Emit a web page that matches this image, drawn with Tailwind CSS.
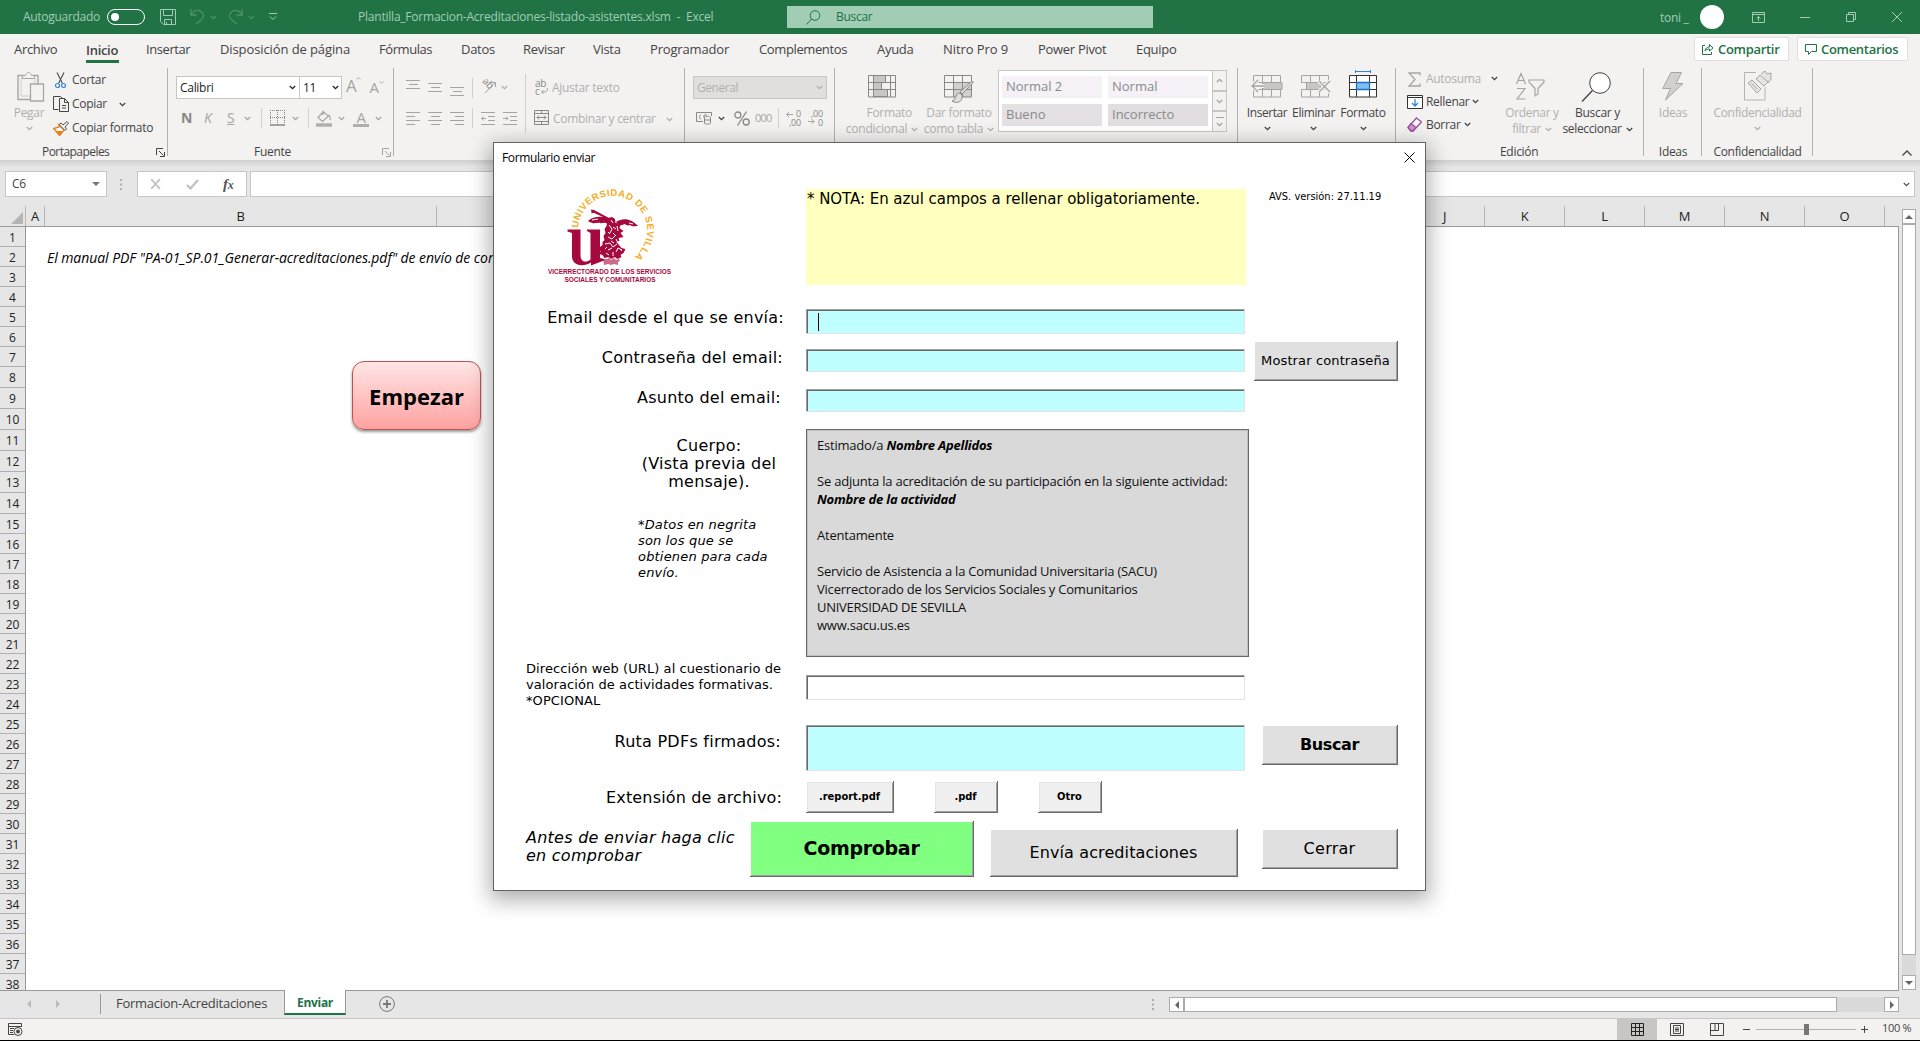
<!DOCTYPE html>
<html lang="es">
<head>
<meta charset="utf-8">
<title>Plantilla_Formacion-Acreditaciones-listado-asistentes.xlsm - Excel</title>
<script src="https://cdn.jsdelivr.net/npm/@tailwindcss/browser@4"></script>
</head>
<body class="relative h-[1041px] w-[1920px] overflow-hidden bg-[#e6e6e6] font-['Open_Sans','Noto_Sans',sans-serif] text-[12px] leading-4 tracking-[-0.3px] whitespace-nowrap text-[#444]">
<svg class="hidden">
  <symbol id="chev" viewBox="0 0 7 5"><path d="M.8 1l2.7 2.7L6.2 1" fill="none" stroke="currentColor" stroke-width="1.3"/></symbol>
  <symbol id="launch" viewBox="0 0 9 9"><path d="M.5 7V.5H7M3 3l4.5 4.5M8.500 4v4.500H4" fill="none" stroke="currentColor"/></symbol>
</svg>
<div class="flex h-full flex-col">

<!-- Title bar -->
<header class="flex h-[34px] shrink-0 items-center bg-[#217346] text-[#a0cdb4]">
  <span class="ml-[23px] w-[84px]">Autoguardado</span>
  <div class="flex h-4 w-[38px] items-center rounded-full border border-white pl-[3px]"><i class="size-2 rounded-full bg-white"></i></div>
  <svg class="ml-[15px] h-[17px] w-4" viewBox="0 0 16 17" fill="none" stroke="#a0cdb4"><path d="M.5.5h15v15h-12l-3-3zM3.500.5v6h9v-6M4.500 15.500v-5h7v5M6.500 13v2.500"/></svg>
  <svg class="ml-[14px] h-4 w-[15px]" viewBox="0 0 15 16" fill="none" stroke="#4d9169" stroke-width="1.3"><path d="M.8 0v6h6M1 6C3 1 8 .5 11 2.500c4 3 3 6 0 8.500l-5 4"/></svg>
  <svg class="ml-[5px] h-[5px] w-[7px] text-[#4d9169]"><use href="#chev"/></svg>
  <svg class="ml-[11px] h-4 w-[15px]" viewBox="0 0 15 16" fill="none" stroke="#4d9169" stroke-width="1.3"><path d="M14.200 0v6h-6M14 6C12 1 7 .5 4 2.500c-4 3-3 6 0 8.500l5 4"/></svg>
  <svg class="ml-[5px] h-[5px] w-[7px] text-[#4d9169]"><use href="#chev"/></svg>
  <svg class="ml-[14px] h-2 w-2" viewBox="0 0 8 8" fill="none" stroke="#a0cdb4"><path d="M0 .5h8M1 3.500L4 6.500 7 3.500"/></svg>
  <span class="ml-[81px] w-[429px] pb-px tracking-[-0.22px] whitespace-pre">Plantilla_Formacion-Acreditaciones-listado-asistentes.xlsm  -  Excel</span>
  <div class="flex h-[22px] w-[366px] items-center bg-[#a0cdb4] text-[#217346]">
    <svg class="ml-[19px] h-[15px] w-[15px]" viewBox="0 0 15 15" fill="none" stroke="#217346"><circle cx="9" cy="5.500" r="4.800"/><path d="M5.500 9L.5 14.500"/></svg>
    <span class="ml-[15px]">Buscar</span>
  </div>
  <span class="mt-px ml-[507px] w-10">toni _</span>
  <i class="size-[24px] rounded-full bg-white"></i>
  <svg class="ml-[28px] h-[11px] w-[13px]" viewBox="0 0 13 11" fill="none" stroke="#a0cdb4"><path d="M.5.500h12v10H.5zM.5 2.500h12M6.500 9V4.500M4.500 6.500l2-2 2 2"/></svg>
  <svg class="ml-[35px] h-[11px] w-[10px]" viewBox="0 0 10 11" stroke="#a0cdb4"><path d="M0 5.500h10"/></svg>
  <svg class="ml-[36px] h-[10px] w-[10px]" viewBox="0 0 10 10" fill="none" stroke="#a0cdb4"><path d="M.5 2.500h7v7h-7zM2.500 2V.5h7v7H8"/></svg>
  <svg class="ml-[36px] h-[10px] w-[10px]" viewBox="0 0 10 10" stroke="#a0cdb4"><path d="M0 0l10 10M10 0L0 10"/></svg>
</header>

<!-- Ribbon tabs -->
<nav class="flex h-[34px] shrink-0 items-center bg-[#f3f2f1] pb-[4px] pl-[14px] text-[13px] leading-[30px]">
  <span class="w-[72px]">Archivo</span>
  <span class="w-[60px]"><b class="block h-[28px] w-[33px] border-b-3 border-[#217346] leading-[30px] font-semibold">Inicio</b></span>
  <span class="w-[74px] tracking-[-0.43px]">Insertar</span>
  <span class="w-[159px] tracking-[-0.1px]">Disposición de página</span>
  <span class="w-[82px] tracking-[-0.43px]">Fórmulas</span>
  <span class="w-[62px]">Datos</span>
  <span class="w-[70px]">Revisar</span>
  <span class="w-[57px]">Vista</span>
  <span class="w-[109px] tracking-[-0.17px]">Programador</span>
  <span class="w-[118px] tracking-[-0.38px]">Complementos</span>
  <span class="w-[66px]">Ayuda</span>
  <span class="w-[95px] tracking-[-0.09px]">Nitro Pro 9</span>
  <span class="w-[98px]">Power Pivot</span>
  <span class="w-[558px]">Equipo</span>
  <span class="flex h-6 w-[95px] items-center rounded-[2px] border border-[#e1dfdd] bg-white pl-[7px] font-semibold text-[#217346]">
    <svg class="mr-[4px] h-3 w-3" viewBox="0 0 12 12" fill="none" stroke="#217346"><path d="M3 2.500H.5v9h9V9M3 8c.5-3 2-4 4.500-4V1.500L11 5 7.500 8V6C5.500 6 4 6.500 3 8z"/></svg>Compartir</span>
  <span class="ml-2 flex h-6 w-[111px] items-center rounded-[2px] border border-[#e1dfdd] bg-white pl-[7px] font-semibold text-[#217346]">
    <svg class="mr-[4px] h-[11px] w-[12px]" viewBox="0 0 12 11" fill="none" stroke="#217346"><path d="M.5.500h11v7h-5l-3 3v-3h-3z"/></svg>Comentarios</span>
</nav>

<!-- Ribbon groups -->
<section class="flex h-[92px] shrink-0 bg-[#f3f2f1] [&>div]:relative [&>div]:h-[92px] [&>div]:shrink-0">
  <div class="w-[168px]">
    <div class="flex h-[74px]">
      <div class="flex w-[53px] flex-col items-center pt-[4px] pl-[5px] text-[#b1afad]">
        <svg class="ml-1 h-[30px] w-[28px]" viewBox="0 0 28 30" fill="none" stroke="#a6a6a6"><path d="M7 3.500H1v24h12" stroke-width="1.400"/><path d="M16 3.500h5v8" stroke-width="1.400"/><path d="M4 6h14v5M4 6v18h9" stroke="#d0cecc"/><path d="M5.500 6.500v-3h3c1-4 5-4 6 0h3v3z" fill="#f3f2f1"/><path d="M13.500 12h13v17h-13z" fill="#f3f2f1" stroke-width="1.300"/></svg>
        <span class="mt-[3px]">Pegar</span>
        <svg class="mt-[5px] h-[5px] w-[7px]"><use href="#chev"/></svg>
      </div>
      <div class="flex flex-col [&>div]:flex [&>div]:h-6 [&>div]:items-center">
        <div><svg class="mr-[6px] ml-[2px] h-[17px] w-[11px]" viewBox="0 0 11 17" fill="none"><path d="M2 .5l5.500 11M9 .5l-5.500 11" stroke="#555" stroke-width="1.200"/><circle cx="2.500" cy="13.500" r="2" stroke="#2b88d8" stroke-width="1.200"/><circle cx="8.500" cy="13.500" r="2" stroke="#2b88d8" stroke-width="1.200"/></svg>Cortar</div>
        <div><svg class="mr-[3px] h-4 w-4" viewBox="0 0 16 16" fill="none" stroke="#444"><path d="M5.500 13.500H.5V.5h7l1.500 1.500M6.500 2.500h5l4 4v9h-9zM11.500 2.500v4h4M9 9.500h4M9 12h4"/></svg>Copiar<svg class="ml-[12px] h-[5px] w-[7px]"><use href="#chev"/></svg></div>
        <div><svg class="mr-[3px] h-[15px] w-4" viewBox="0 0 16 15" fill="none"><path d="M6 4l5 5-4.500 5.500L.8 7.500 6 6z" fill="#fff" stroke="#e8811a" stroke-width="1.400"/><path d="M3 10l4 4 3-4z" fill="#e8811a"/><path d="M6 3.500l2-1.500 2 2 4-3.500 1.500 1.500-3.500 4 1.500 2-1.500 1.500z" fill="#f3f2f1" stroke="#555"/></svg>Copiar formato</div>
      </div>
    </div>
    <div class="flex items-center pt-[2px] pl-[42px]"><span class="w-[114px] tracking-[-0.55px]">Portapapeles</span><svg class="size-[9px]"><use href="#launch"/></svg></div>
    <i class="absolute top-0 right-0 h-[88px] w-px bg-[#b3b0ad]"></i>
  </div>

  <div class="w-[226px] text-[#a6a4a2]">
    <div class="h-[74px] pt-2 pl-2">
      <div class="flex h-[23px]">
        <div class="flex w-[124px] items-center justify-between border border-[#c8c6c4] bg-white pr-[3px] pl-[3px] text-[#222]">Calibri<svg class="h-[5px] w-[7px]"><use href="#chev"/></svg></div>
        <div class="-ml-px flex w-[43px] items-center justify-between border border-[#c8c6c4] bg-white pr-[2px] pl-[3px] text-[#222]">11<svg class="h-[5px] w-[7px]"><use href="#chev"/></svg></div>
        <span class="ml-1 flex text-[17px] leading-5">A<svg class="h-[5px] w-[5px] rotate-180"><use href="#chev"/></svg></span>
        <span class="ml-[8px] flex text-[15px] leading-[22px]">A<svg class="mt-1 h-[5px] w-[5px]"><use href="#chev"/></svg></span>
      </div>
      <div class="mt-[9px] flex h-5 items-center text-[14px]">
        <b class="ml-[5px] w-[23px] text-[#8a8886]">N</b><i class="w-[23px]">K</i><u class="w-[17px]">S</u><svg class="mt-px h-[5px] w-[7px]"><use href="#chev"/></svg>
        <i class="ml-[10px] h-5 w-px bg-[#d2d0ce]"></i>
        <svg class="ml-2 h-[16px] w-[15px]" viewBox="0 0 15 16" fill="none" stroke="#8a8886"><path d="M0 .5h15M.5 0v15M14.500 0v15M7.500 0v15M0 7.500h15" stroke-dasharray="1 1"/><path d="M0 15h15" stroke-width="1.500"/></svg>
        <svg class="mt-px ml-[7px] h-[5px] w-[7px]"><use href="#chev"/></svg>
        <i class="ml-[9px] h-5 w-px bg-[#d2d0ce]"></i>
        <svg class="ml-[7px] h-[17px] w-4" viewBox="0 0 16 17" fill="none" stroke="#a6a4a2"><path d="M7 2L2 7.500l4.500 4 6-5.500L7 1.500zM7 5V1M12.500 5c2 1 2 3 1.500 5" stroke-width="1.200"/><path d="M0 15h16" stroke="#b3aeae" stroke-width="3.500"/></svg>
        <svg class="mt-px ml-[6px] h-[5px] w-[7px]"><use href="#chev"/></svg>
        <span class="ml-[8px] flex h-[17px] w-4 justify-center border-b-3 border-[#b3aeae] text-[15px] leading-[14px]">A</span>
        <svg class="mt-px ml-[6px] h-[5px] w-[7px]"><use href="#chev"/></svg>
      </div>
    </div>
    <div class="flex items-center pt-[2px] pl-[86px]"><span class="w-[128px] text-[#444]">Fuente</span><svg class="size-[9px]"><use href="#launch"/></svg></div>
    <i class="absolute top-0 right-0 h-[88px] w-px bg-[#b3b0ad]"></i>
  </div>

  <div class="w-[291px] text-[#b1afad]">
    <div class="flex pl-3">
      <div class="w-[119px]">
        <div class="flex h-[39px] items-center">
          <svg class="mt-px h-[18px] w-[58px]" viewBox="0 0 58 18" stroke="#a6a4a2"><path d="M0 1.500h14M3 5.500h9M0 9.500h14M22 4.500h14M25 8.500h9M22 12.500h14M44 8.500h14M47 12.500h9M44 16.500h14"/></svg>
          <i class="ml-2 h-5 w-px bg-[#d2d0ce]"></i>
          <svg class="mb-1 ml-[7px] h-4 w-[17px] overflow-visible" viewBox="0 0 17 16" fill="none" stroke="#a6a4a2"><path d="M5 15L15 5M11 4.500h4.500V9"/><text x="0" y="8" transform="rotate(45 6 8)" class="fill-[#8a8886] stroke-none text-[10px]">ab</text></svg>
          <svg class="ml-1 h-[5px] w-[7px]"><use href="#chev"/></svg>
        </div>
        <div class="mt-[-1px] flex h-6 items-center">
          <svg class="h-[15px] w-[58px]" viewBox="0 0 58 15" stroke="#a6a4a2"><path d="M0 1.500h14M0 5.500h9M0 9.500h14M0 13.500h9M22 1.500h14M25 5.500h9M22 9.500h14M25 13.500h9M44 1.500h14M49 5.500h9M44 9.500h14M49 13.500h9"/></svg>
          <i class="ml-2 h-5 w-px bg-[#d2d0ce]"></i>
          <svg class="ml-2 h-[15px] w-[37px]" viewBox="0 0 37 15" fill="none" stroke="#a6a4a2"><path d="M0 1.500h14M7 5.500h7M7 9.500h7M0 13.500h14M5 7.500H.5m2-2l-2 2 2 2M22 1.500h14M29 5.500h7M29 9.500h7M22 13.500h14M22 7.500h5m-2-2l2 2-2 2"/></svg>
        </div>
      </div>
      <i class="mt-[6px] h-[59px] w-px bg-[#d2d0ce]"></i>
      <div class="pl-2">
        <div class="flex h-[39px] items-center">
          <svg class="mr-[3px] h-[17px] w-[15px] overflow-visible" viewBox="0 0 15 17" fill="none" stroke="#a6a4a2"><text x="1" y="8" class="fill-[#8a8886] stroke-none text-[10px]">ab</text><text x="1" y="16" class="fill-[#8a8886] stroke-none text-[10px]">c</text><path d="M13.500 9c0 4-2 4-6 4m2-2l-2 2 2 2"/></svg>Ajustar texto
        </div>
        <div class="flex h-6 items-center">
          <svg class="mr-[4px] mb-[3px] h-[15px] w-[15px]" viewBox="0 0 15 15" fill="none" stroke="#8a8886"><path d="M.5.500h14v14H.5zM0 3.500h15M0 11.500h15M7.500 0v3M7.500 12v3M3 7.500h9M5 5.500l-2 2 2 2M10 5.500l2 2-2 2"/></svg>Combinar y centrar<svg class="ml-[10px] h-[5px] w-[7px]"><use href="#chev"/></svg>
        </div>
      </div>
    </div>
    <i class="absolute top-0 right-0 h-[88px] w-px bg-[#b3b0ad]"></i>
  </div>

  <div class="w-[150px] pt-2 pl-2 text-[#a6a4a2]">
    <div class="flex h-[23px] w-[134px] items-center justify-between border border-[#c8c6c4] bg-[#e1dfdd] px-[3px] text-[#b1afad]"><span class="tracking-[-0.45px]">General</span><svg class="h-[5px] w-[7px]"><use href="#chev"/></svg></div>
    <div class="mt-[9px] flex h-5 items-center pl-[3px]">
      <svg class="h-3.5 w-4" viewBox="0 0 16 14" fill="none" stroke="#8a8886"><path d="M7 10.500H.5v-9h15V5M5 4C3 4 3 8 5 8M8 7V4h3"/><path d="M8.500 6.500c0-1.500 6-1.500 6 0v5.500c0 1.500-6 1.500-6 0zM8.500 9h6" fill="#f3f2f1"/></svg>
      <svg class="ml-[6px] h-[5px] w-[7px] text-[#444]"><use href="#chev"/></svg>
      <svg class="ml-[9px] h-[15px] w-4" viewBox="0 0 16 15" fill="none" stroke="#8a8886" stroke-width="1.300"><circle cx="3.800" cy="4" r="3"/><circle cx="12.200" cy="11" r="3"/><path d="M12.500.5l-9 14"/></svg>
      <span class="ml-[5px] text-[11px] tracking-[-0.8px]">000</span>
      <i class="ml-[7px] h-5 w-px bg-[#d2d0ce]"></i>
      <svg class="ml-[7px] h-4 w-[38px] overflow-visible fill-[#8a8886] text-[9px]" viewBox="0 0 38 16"><path d="M7 4.500H.5m2.500-2.500L.5 4.500 3 7M22 11.500h6m-2.500-2.500l2.500 2.500-2.500 2.500" fill="none" stroke="#a6a4a2"/><text x="10" y="7">0</text><text x="3" y="16">,00</text><text x="25" y="7">,00</text><text x="32" y="16">0</text></svg>
    </div>
    <i class="absolute top-0 right-0 h-[88px] w-px bg-[#b3b0ad]"></i>
  </div>

  <div class="flex w-[403px] text-[#b1afad]">
    <div class="ml-2 flex w-[74px] flex-col items-center pt-[7px]">
      <svg class="ml-1 h-[23px] w-[28px]" viewBox="0 0 28 23" fill="none" stroke="#8a8886"><path d="M5.500.500h12v7h-12zM5.500 7.500h8v7h-8zM5.500 14.500h14v7h-14z" fill="#c8c6c4"/><path d="M.5.500h27v21.500H.5zM0 7.500h28M0 14.500h28M5.500 0v22M22.500 0v22"/></svg>
      <span class="mt-[7px] self-end pr-[5px]">Formato</span><span class="flex items-center pl-1 tracking-[-0.2px]">condicional<svg class="ml-1 h-[5px] w-[7px]"><use href="#chev"/></svg></span>
    </div>
    <div class="ml-[4px] flex w-[76px] flex-col items-center pt-[7px]">
      <svg class="h-[29px] w-[30px]" viewBox="0 0 30 29" fill="none" stroke="#8a8886"><path d="M9 7h18v15H9z" fill="#d2d0ce" stroke="none"/><path d="M.5.500h27v21.500H.5zM0 7.500h28M0 14.500h28M9.500 0v22M18.500 0v22"/><path d="M29.500 7L18 19l-2-2L27.500 6.500zM16 18c-5 0-3 6-8 8 5 3 11 1 10-6z" fill="#e1dfdd"/></svg>
      <span class="mt-px">Dar formato</span><span class="flex items-center">como tabla<svg class="ml-1 h-[5px] w-[7px]"><use href="#chev"/></svg></span>
    </div>
    <div class="mt-[2px] ml-px flex h-[62px] w-[229px] border border-[#c8c6c4] bg-white text-[13px] tracking-normal text-[#8a8a8a]">
      <div class="grid w-[213px] grid-cols-[100px_100px] grid-rows-[22px_22px] gap-x-[6px] gap-y-[6px] pt-[5px] pl-[3px] leading-[21px] [&>span]:pl-1">
        <span class="bg-[#f5f1f7]">Normal 2</span><span class="bg-[#f5f1f7]">Normal</span><span class="bg-[#e5e0e4]">Bueno</span><span class="bg-[#e2dde1]">Incorrecto</span>
      </div>
      <div class="flex flex-1 flex-col border-l border-[#c8c6c4] bg-[#f3f2f1] text-[#a6a4a2] [&>div]:flex [&>div]:flex-1 [&>div]:flex-col [&>div]:items-center [&>div]:justify-center">
        <div><svg class="h-[5px] w-[7px] rotate-180"><use href="#chev"/></svg></div>
        <div class="border-y-2 border-[#c8c6c4]"><svg class="h-[5px] w-[7px]"><use href="#chev"/></svg></div>
        <div><i class="mb-1 h-px w-2 bg-[#a6a4a2]"></i><svg class="h-[5px] w-[7px]"><use href="#chev"/></svg></div>
      </div>
    </div>
    <i class="absolute top-0 right-0 h-[88px] w-px bg-[#b3b0ad]"></i>
  </div>

  <div class="flex w-[158px] pl-[6px]">
    <div class="flex w-[46px] flex-col items-center pt-[7px]">
      <svg class="h-[23px] w-[32px]" viewBox="0 0 32 23" fill="none" stroke="#a6a4a2"><path d="M2.500.500h27v21.500h-27zM2 7.500h28M2 14.500h28M11.500 0v22M20.500 0v22"/><path d="M12 7.500h19v7H12z" fill="#c8c6c4"/><path d="M1 11h12M7 5l-6 6 6 6" stroke="#f3f2f1" stroke-width="4"/><path d="M1 11h12M7 5l-6 6 6 6" stroke-width="1.300"/></svg>
      <span class="mt-[7px] tracking-[-0.45px]">Insertar</span><svg class="mt-[5px] h-[5px] w-[7px]"><use href="#chev"/></svg>
    </div>
    <div class="flex w-[47px] flex-col items-center pt-[7px]">
      <svg class="ml-1 h-[23px] w-[30px]" viewBox="0 0 30 23" fill="none" stroke="#a6a4a2"><path d="M.5.500h27v7H.5zM.5 14.500h27v7.500H.5zM9.500 0v22M18.500 0v22"/><path d="M5.500 7.500h14v7h-14z" fill="#c8c6c4"/><path d="M18 6l11 11M29 6L18 17" stroke="#f3f2f1" stroke-width="4"/><path d="M18 6l11 11M29 6L18 17" stroke-width="1.300"/></svg>
      <span class="mt-[7px] tracking-[-0.37px]">Eliminar</span><svg class="mt-[5px] h-[5px] w-[7px]"><use href="#chev"/></svg>
    </div>
    <div class="ml-[2px] flex w-[48px] flex-col items-center pt-[2px]">
      <svg class="h-[28px] w-[28px]" viewBox="0 0 28 28" fill="none" stroke="#333"><path d="M.5 5.500h27v21.500H.5z" fill="#fff"/><path d="M0 12.500h28M0 19.500h28M7.500 5v22M20.500 5v22"/><path d="M7.500 12.500h13v7h-13z" fill="#83beec" stroke="#1a6fc4" stroke-width="1.300"/><path d="M6.500 1.500h15M6.500 0v3M21.500 0v3" stroke="#2b88d8"/></svg>
      <span class="mt-[7px]">Formato</span><svg class="mt-[5px] h-[5px] w-[7px]"><use href="#chev"/></svg>
    </div>
    <i class="absolute top-0 right-0 h-[88px] w-px bg-[#b3b0ad]"></i>
  </div>

  <div class="w-[248px]">
    <div class="flex h-[74px]">
      <div class="-mt-px ml-[11px] w-[95px] [&>div]:flex [&>div]:h-[23px] [&>div]:items-center">
        <div class="text-[#b1afad]"><svg class="mt-px mr-[5px] ml-px h-[15px] w-[13px]" viewBox="0 0 13 15" fill="none" stroke="#a6a4a2" stroke-width="1.300"><path d="M12 3.500V1H1l6 6.500L1 14h11v-2.500"/></svg><span>Autosuma</span><svg class="ml-[10px] h-[5px] w-[7px] text-[#444]"><use href="#chev"/></svg></div>
        <div><svg class="mr-[3px] h-[14px] w-4" viewBox="0 0 16 14" fill="none" stroke="#333"><path d="M.5.500h15v13H.5zM0 2.500h16" fill="#fff"/><path d="M8 4v7M5 8l3 3 3-3" stroke="#2b88d8" stroke-width="1.300"/></svg>Rellenar<svg class="ml-[3px] h-[5px] w-[7px]"><use href="#chev"/></svg></div>
        <div><svg class="mr-[4px] h-[15px] w-[15px]" viewBox="0 0 15 15" fill="#fff" stroke="#9b4f9f" stroke-width="1.300"><path d="M9.500 1l5 4L6 14H4L1 10.500z"/><path d="M4 6.500l5 4L6 14H4L1 10.500z" fill="#cd92d1"/></svg>Borrar<svg class="ml-[3px] h-[5px] w-[7px]"><use href="#chev"/></svg></div>
      </div>
      <div class="flex w-[60px] flex-col items-center pt-[4px] text-[#b1afad]">
        <svg class="mr-1 h-[28px] w-[29px]" viewBox="0 0 29 28" fill="none" stroke="#a6a4a2"><path d="M.5 12L5 1.500 9.500 12M2 8.500h6M1 16.500h8L1 27h8.500M13 8h15v2l-6 6.500V22l-3 2v-7.500L13 10z" stroke-width="1.200"/></svg>
        <span class="mt-[5px]">Ordenar y</span><span class="flex items-center">filtrar<svg class="ml-1 h-[5px] w-[7px]"><use href="#chev"/></svg></span>
      </div>
      <div class="flex w-[71px] flex-col items-center pt-[4px]">
        <svg class="mr-[3px] h-[30px] w-[30px]" viewBox="0 0 30 30" fill="#fff" stroke="#444"><circle cx="19" cy="11" r="10.300"/><path d="M11.500 18.500L1 29.500" stroke-width="1.300"/></svg>
        <span class="mt-[3px]">Buscar y</span><span class="flex items-center tracking-[-0.35px]">seleccionar<svg class="ml-1 h-[5px] w-[7px]"><use href="#chev"/></svg></span>
      </div>
    </div>
    <div class="pt-[2px] pl-[104px]">Edición</div>
    <i class="absolute top-0 right-0 h-[88px] w-px bg-[#b3b0ad]"></i>
  </div>

  <div class="w-[58px] text-center">
    <div class="flex h-[74px] flex-col items-center pt-[4px] text-[#b1afad]">
      <svg class="h-[29px] w-[22px]" viewBox="0 0 22 29" fill="#d2d0ce" stroke="#a6a4a2"><path d="M9 .5h10.500L14 11.500h7L3.500 28l5-11.500H.8z"/></svg>
      <span class="mt-[4px]">Ideas</span>
    </div>
    <div class="pt-[2px]">Ideas</div>
    <i class="absolute top-0 right-0 h-[88px] w-px bg-[#b3b0ad]"></i>
  </div>

  <div class="w-[111px] text-center tracking-[-0.35px]">
    <div class="flex h-[74px] flex-col items-center pt-[2px] text-[#b1afad]">
      <svg class="h-[31px] w-[28px]" viewBox="0 0 28 31" fill="none" stroke="#a6a4a2"><path d="M12 2.500H.5V30h20.500V17" stroke="#b5b3b1"/><path d="M4 13l4-3 9 9-4 4zM7.500 13.500l5.500 5.500M12 9l4-4 8 7-4 4zM17 4l4-3 2 3 4-1v6l-3 4" fill="#e6e4e2"/></svg>
      <span class="mt-[4px]">Confidencialidad</span><svg class="mt-[5px] h-[5px] w-[7px]"><use href="#chev"/></svg>
    </div>
    <div class="pt-[2px]">Confidencialidad</div>
    <i class="absolute top-0 right-0 h-[88px] w-px bg-[#b3b0ad]"></i>
  </div>
  <svg class="mt-[82px] ml-[89px] h-[6px] w-[10px]" viewBox="0 0 10 6" fill="none" stroke="#444" stroke-width="1.300"><path d="M.5 5.500L5 1l4.500 4.500"/></svg>
</section>

<!-- Formula bar -->
<section class="flex h-[46px] shrink-0 bg-linear-to-b from-[#cfcfcf] to-[#e6e6e6] to-[7px] pt-[11px] pl-[5px] [&>div]:flex [&>div]:h-[26px] [&>div]:items-center [&>div]:border [&>div]:border-[#c6c6c6] [&>div]:bg-white">
  <div class="w-[102px] justify-between pr-[6px] pl-[6px]">C6<i class="border-x-[4px] border-t-[4px] border-x-transparent border-t-[#777]"></i></div>
  <svg class="mt-2 ml-[13px] h-3 w-[3px]" viewBox="0 0 3 12" fill="#b0b0b0"><path d="M0 0h2v2H0zM0 4.500h2v2H0zM0 9h2v2H0z"/></svg>
  <div class="ml-[14px] w-[110px]">
    <svg class="ml-[12px] h-[10px] w-[11px]" viewBox="0 0 11 10" stroke="#c0c0c0" stroke-width="1.800"><path d="M1 0l9 10M10 0L1 10"/></svg>
    <svg class="ml-[25px] h-[11px] w-[13px]" viewBox="0 0 13 11" fill="none" stroke="#c0c0c0" stroke-width="2.200"><path d="M1 6l3.500 3.500L12 1"/></svg>
    <span class="ml-[24px] font-['Liberation_Serif',serif] text-[15px] font-bold text-[#555] italic">f<span class="text-[12px]">x</span></span>
  </div>
  <div class="ml-[3px] w-[1665px] justify-end pr-1"><svg class="h-[5px] w-[7px] text-[#555]"><use href="#chev"/></svg></div>
</section>

<!-- Worksheet -->
<section class="flex h-[784px] shrink-0">
  <div class="w-[1899px]">
    <div id="cols" class="flex h-[21px] items-center border-b border-[#999] text-[13px] text-[#222] [&>span]:flex [&>span]:h-[20px] [&>span]:shrink-0 [&>span]:items-center [&>span]:justify-center [&>span]:border-r [&>span]:border-[#b5b5b5] [&>span]:pb-px">
      <span class="w-[26px]"><i class="mt-1 ml-2 border-b-[12px] border-l-[12px] border-b-[#b5b5b5] border-l-transparent"></i></span>
    </div>
    <div class="flex h-[763px] overflow-hidden">
      <div id="rows" class="w-[26px] shrink-0 border-r border-[#999] text-center text-[12px] tracking-normal text-[#222] [&>div]:border-b [&>div]:border-[#b0b0b0]"></div>
      <div class="flex-1 border-r border-[#999] bg-white pt-[21px] pl-[21px]">
        <p class="h-5 text-[14px] leading-5 tracking-[-0.06px] text-black italic">El manual PDF "PA-01_SP.01_Generar-acreditaciones.pdf" de envío de cor</p>
        <button class="mt-[93px] ml-[305px] block h-[69px] w-[129px] rounded-[12px] border border-[#c0504d] bg-linear-to-b from-[#ffe5e5] to-[#ffa2a1] text-[22px] leading-[66px] font-bold tracking-normal text-black shadow-[0_2px_3px_rgba(0,0,0,0.4)]">Empezar</button>
      </div>
    </div>
  </div>
  <div class="mt-[3px] ml-[3px] flex w-[14px] flex-col bg-[#dadada] [&>div]:border [&>div]:border-[#ababab] [&>div]:bg-white">
    <div class="flex h-[15px] items-center justify-center"><i class="border-x-[4px] border-b-[4px] border-x-transparent border-b-[#666]"></i></div>
    <div class="h-[731px]"></div>
    <div class="mt-auto flex h-[15px] items-center justify-center"><i class="border-x-[4px] border-t-[4px] border-x-transparent border-t-[#666]"></i></div>
  </div>
</section>

<!-- Sheet tabs -->
<section class="flex h-[29px] shrink-0 border-b border-[#c6c6c6] text-[13px]">
  <div class="flex w-[1899px] border-t border-[#999]">
    <i class="mt-[9px] ml-[27px] h-0 border-y-[4px] border-r-[4px] border-y-transparent border-r-[#bbb]"></i>
    <i class="mt-[9px] ml-[25px] h-0 border-y-[4px] border-l-[4px] border-y-transparent border-l-[#bbb]"></i>
    <i class="mt-[3px] ml-10 h-5 w-px bg-[#999]"></i>
    <span class="ml-[15px] w-[168px] leading-[24px] tracking-[-0.27px]">Formacion-Acreditaciones</span>
    <span class="-mt-px h-[25px] w-[62px] border-x border-b-2 border-x-[#999] border-b-[#217346] bg-white text-center text-[12px] leading-[26px] font-bold text-[#217346]">Enviar</span>
    <svg class="mt-[5px] ml-[33px] size-4" viewBox="0 0 16 16" fill="none" stroke="#777"><circle cx="8" cy="8" r="7.400"/><path d="M8 4v8M4 8h8" stroke-width="1.800"/></svg>
    <svg class="mt-2 ml-[757px] h-3 w-[2px]" viewBox="0 0 2 12" fill="#aaa"><path d="M0 0h2v2H0zM0 4.500h2v2H0zM0 9h2v2H0z"/></svg>
    <div class="mt-[6px] ml-auto flex h-[15px] w-[730px] bg-[#dadada] [&>div]:border [&>div]:border-[#ababab] [&>div]:bg-white">
      <div class="flex w-[15px] items-center justify-center"><i class="border-y-[4px] border-r-[4px] border-y-transparent border-r-[#666]"></i></div>
      <div class="w-[653px]"></div>
      <div class="ml-auto flex w-[15px] items-center justify-center"><i class="border-y-[4px] border-l-[4px] border-y-transparent border-l-[#666]"></i></div>
    </div>
  </div>
</section>

<!-- Status bar -->
<footer class="flex h-[22px] shrink-0 items-center border-b border-black bg-[#f3f2f1]">
  <svg class="ml-2 h-[13px] w-[15px]" viewBox="0 0 15 13" fill="none" stroke="#444"><path d="M6 11.500H.5V.5h13V4M0 3.500h14M2 5.500h4M2 7.500h3M2 9.500h3"/><circle cx="10" cy="8.500" r="4"/><circle cx="10" cy="8.500" r="1.500" fill="#444"/></svg>
  <span class="ml-[1594px] flex h-full w-10 items-center justify-center bg-[#c8c6c4]"><svg class="size-[13px]" viewBox="0 0 13 13" fill="none" stroke="#222"><path d="M.5.500h12v12H.5zM0 4.500h13M0 8.500h13M4.500 0v13M8.500 0v13"/></svg></span>
  <svg class="ml-[13px] h-[13px] w-[14px]" viewBox="0 0 14 13" fill="none" stroke="#444"><path d="M.5.500h13v12H.5zM3.500 2.500h7v8h-7zM5 5h4M5 6.500h4M5 8h4"/></svg>
  <svg class="ml-[26px] h-[13px] w-[14px]" viewBox="0 0 14 13" fill="none" stroke="#444"><path d="M.5.500h13v12H.5zM.5 7.500h8V0M5 0v7"/></svg>
  <i class="ml-[19px] h-px w-[7px] bg-[#444]"></i>
  <i class="ml-[6px] flex h-px w-[100px] items-center bg-[#b3b0ad]"><i class="ml-[48px] h-[11px] w-[5px] bg-[#777]"></i></i>
  <svg class="ml-[5px] size-[7px]" viewBox="0 0 7 7" stroke="#444"><path d="M0 3.500h7M3.500 0v7"/></svg>
  <span class="ml-[14px] pb-[3px] text-[11px]">100 %</span>
</footer>
</div>

<!-- Mail form window -->
<main class="absolute top-[142px] left-[493px] flex h-[749px] w-[933px] flex-col border border-[#636363] bg-white font-['DejaVu_Sans',sans-serif] text-[16px] leading-[18px] tracking-[0.25px] text-black shadow-[0_6px_20px_3px_rgba(0,0,0,0.32)]">
  <div class="flex h-[30px] items-center justify-between pr-[10px] pl-2">
    <span class="font-['Open_Sans',sans-serif] text-[12px] tracking-[-0.38px]">Formulario enviar</span>
    <svg class="mt-[-2px] size-[11px]" viewBox="0 0 11 11" stroke="#000"><path d="M.5.500l10 10M10.500.500l-10 10"/></svg>
  </div>
  <div class="flex h-[642px]">
    <div class="w-[312px]">
      <svg class="mt-[14px] ml-[53px] h-[100px] w-[126px]" viewBox="0 0 126 100">
        <path id="ring" d="M31.200 41A34.500 34.500 0 1 1 85.500 71.500" fill="none"/>
        <text class="fill-[#f5ac1d] font-['Liberation_Sans'] text-[9.500px] font-bold tracking-normal"><textPath href="#ring" textLength="136">UNIVERSIDAD DE SEVILLA</textPath></text>
        <g fill="#a6093d">
          <path d="M20.500 42.500h13v26c0 6 5 8 10 4V46l-3.500-2v-1.500h13V71l4 1v1.500L44 78.500v-3c-8 5-19 3-19-6V46l-4.500-1.500z"/>
          <path d="M44 22.500l3 .5 15 8-.8 1.300-14.500-6.500-2 .7zM41 34c5-5 12-5 20-3.500l4 5-5 1c-3-2-6 1-8-1-2 1-4 0-5 1-2-1-4-1-6-2.500zM69 35c7-5 16-3 22 4-4 0-6 1-8-1-2 1-4 0-5-1l-6 2z"/>
          <path d="M61 31l4-1 3 2 .5 4 5 1-1 4 4 3-3 2 3 4-5 1 1 3-3 1 5 6 4 1-2 4-3 2 1 2-4 2-3-2-3 2-3-2-4 1-2-3-3-1 1-3-3-2 5-4 0-3 2-2-1-4 2-3-1-4 2-3z"/>
          <path d="M56 72h5l1-2 2 3 3-2 2 2 3-1 1 2-2 1 0 3-4-1-3 1-3-1-4 1z" opacity=".6"/>
        </g>
        <g fill="none" stroke="#fff" stroke-width="1"><path d="M62 38l3 4-2 4M66 40l3 2M61 50l4 2 3-3M58 57l5-1 3 4 4-3M61 63l4-2M69 65l2-4 4 2M66 46l3 3M69 52l2 4M66 65v4M59 66l3 2M64 33l2 3M70 39l1 5M61 45l2 2M64 54l3 2M73 62l2 2M60 60l-2 2M45 33l6-1M82 36l4 1"/></g>
        <g class="fill-[#a6093d] font-['Liberation_Sans'] text-[6.500px] font-bold tracking-normal"><text x="1" y="86.500" textLength="123" lengthAdjust="spacingAndGlyphs">VICERRECTORADO DE LOS SERVICIOS</text><text x="17.500" y="95.300" textLength="91" lengthAdjust="spacingAndGlyphs">SOCIALES Y COMUNITARIOS</text></g>
      </svg>
      <p class="mt-[22px] pr-[22px] text-right">Email desde el que se envía:</p>
      <p class="mt-[22px] pr-[23px] text-right">Contraseña del email:</p>
      <p class="mt-[22px] pr-[25px] text-right">Asunto del email:</p>
      <p class="mt-[30px] ml-[145px] w-[140px] text-center">Cuerpo:<br>(Vista previa del<br>mensaje).</p>
      <p class="mt-[26px] ml-[144px] text-[13px] leading-4 tracking-[0.18px] italic">*Datos en negrita<br>son los que se<br>obtienen para cada<br>envío.</p>
      <p class="mt-[80px] ml-[32px] text-[13px] leading-4 tracking-[0.08px]">Dirección web (URL) al cuestionario de<br>valoración de actividades formativas.<br>*OPCIONAL</p>
      <p class="mt-[24px] pr-[25px] text-right">Ruta PDFs firmados:</p>
      <p class="mt-[38px] pr-[24px] text-right tracking-[0.15px]">Extensión de archivo:</p>
    </div>
    <div class="w-[448px] [&>div]:border [&>div]:border-t-[#a0a0a0] [&>div]:border-r-[#e3e3e3] [&>div]:border-b-[#e3e3e3] [&>div]:border-l-[#a0a0a0] [&>div]:shadow-[inset_1px_1px_0_#696969]">
      <p class="mt-4 h-[96px] w-[440px] bg-[#ffffc0] pl-px text-[15px] leading-[20px] tracking-[-0.05px]">* NOTA: En azul campos a rellenar obligatoriamente.</p>
      <div class="mt-6 h-[25px] w-[439px] bg-[#c0ffff] pt-[3px] pl-[11px]"><i class="block h-[18px] w-px bg-black"></i></div>
      <div class="mt-[15px] h-[23px] w-[439px] bg-[#c0ffff]"></div>
      <div class="mt-[17px] h-[23px] w-[439px] bg-[#c0ffff]"></div>
      <section class="mt-[17px] h-[228px] w-[443px] border border-[#696969] bg-[#d9d9d9] pt-[6px] pl-[10px] font-['Open_Sans',sans-serif] text-[13px] tracking-[-0.21px] text-[#111] shadow-[inset_0_0_0_1px_#c0c0c0] [&_b]:text-black">
        <p>Estimado/a <b class="italic">Nombre Apellidos</b></p>
        <p class="mt-[18px]">Se adjunta la acreditación de su participación en la siguiente actividad:</p>
        <p><b class="italic">Nombre de la actividad</b></p>
        <p class="mt-[18px]">Atentamente</p>
        <p class="mt-[18px]">Servicio de Asistencia a la Comunidad Universitaria (SACU)<br>Vicerrectorado de los Servicios Sociales y Comunitarios<br><span class="tracking-[-0.26px]">UNIVERSIDAD DE SEVILLA</span><br>www.sacu.us.es</p>
      </section>
      <div class="mt-[18px] h-[25px] w-[439px]"></div>
      <div class="mt-[25px] h-[46px] w-[439px] bg-[#c0ffff]"></div>
      <section class="mt-[10px] flex gap-[40px] font-['DejaVu_Sans_Condensed',sans-serif] text-[11px] font-bold tracking-normal [&>button]:h-8 [&>button]:border-r [&>button]:border-b [&>button]:border-[#696969] [&>button]:bg-[#f0f0f0] [&>button]:shadow-[inset_1px_1px_0_#fff,inset_2px_2px_0_#e3e3e3,inset_-1px_-1px_0_#a0a0a0]">
        <button class="w-[88px]">.report.pdf</button><button class="w-[64px]">.pdf</button><button class="w-[64px]">Otro</button>
      </section>
    </div>
    <div class="flex-1 [&>button]:block [&>button]:border-r [&>button]:border-b [&>button]:border-[#696969] [&>button]:bg-[#e0e0e0] [&>button]:shadow-[inset_1px_1px_0_#fff,inset_-1px_-1px_0_#a0a0a0]">
      <p class="mt-[15px] ml-[15px] font-['DejaVu_Sans_Condensed',sans-serif] text-[11px] tracking-normal">AVS. versión: 27.11.19</p>
      <button class="mt-[135px] h-[40px] w-[144px] text-[13px] tracking-[0.13px]">Mostrar contraseña</button>
      <button class="mt-[344px] ml-2 h-[40px] w-[136px] font-bold tracking-[-0.35px]">Buscar</button>
    </div>
  </div>
  <div class="flex pt-[6px] [&>button]:block [&>button]:border-r [&>button]:border-b [&>button]:border-[#696969] [&>button]:bg-[#e0e0e0] [&>button]:shadow-[inset_1px_1px_0_#fff,inset_-1px_-1px_0_#a0a0a0]">
    <p class="mt-2 ml-[32px] w-[224px] italic">Antes de enviar haga clic<br>en comprobar</p>
    <button class="h-[56px] w-[224px] bg-[#80ff80]! pb-[2px] text-[19px] font-bold tracking-[-0.29px]">Comprobar</button>
    <button class="mt-2 ml-4 h-12 w-[248px] tracking-[0.11px]">Envía acreditaciones</button>
    <button class="mt-2 ml-6 h-[40px] w-[136px]">Cerrar</button>
  </div>
</main>

<script>
// Column headers: letter and width in pixels
const cols = [['A',19],['B',392],['C',488],['D',80],['E',80],['F',80],['G',80],['H',80],['I',80],['J',80],['K',80],['L',80],['M',80],['N',80],['O',80]];
document.getElementById('cols').insertAdjacentHTML('beforeend', cols.map(([n,w]) => `<span style="width:${w}px">${n}</span>`).join(''));
// Row headers: rows 8 to 14 are one pixel taller
let html = '';
for (let r = 1; r <= 38; r++) { const h = r >= 8 && r <= 14 ? 21 : 20; html += `<div style="height:${h}px;line-height:${h + 1}px">${r}</div>`; }
document.getElementById('rows').innerHTML = html;
</script>
</body>
</html>
